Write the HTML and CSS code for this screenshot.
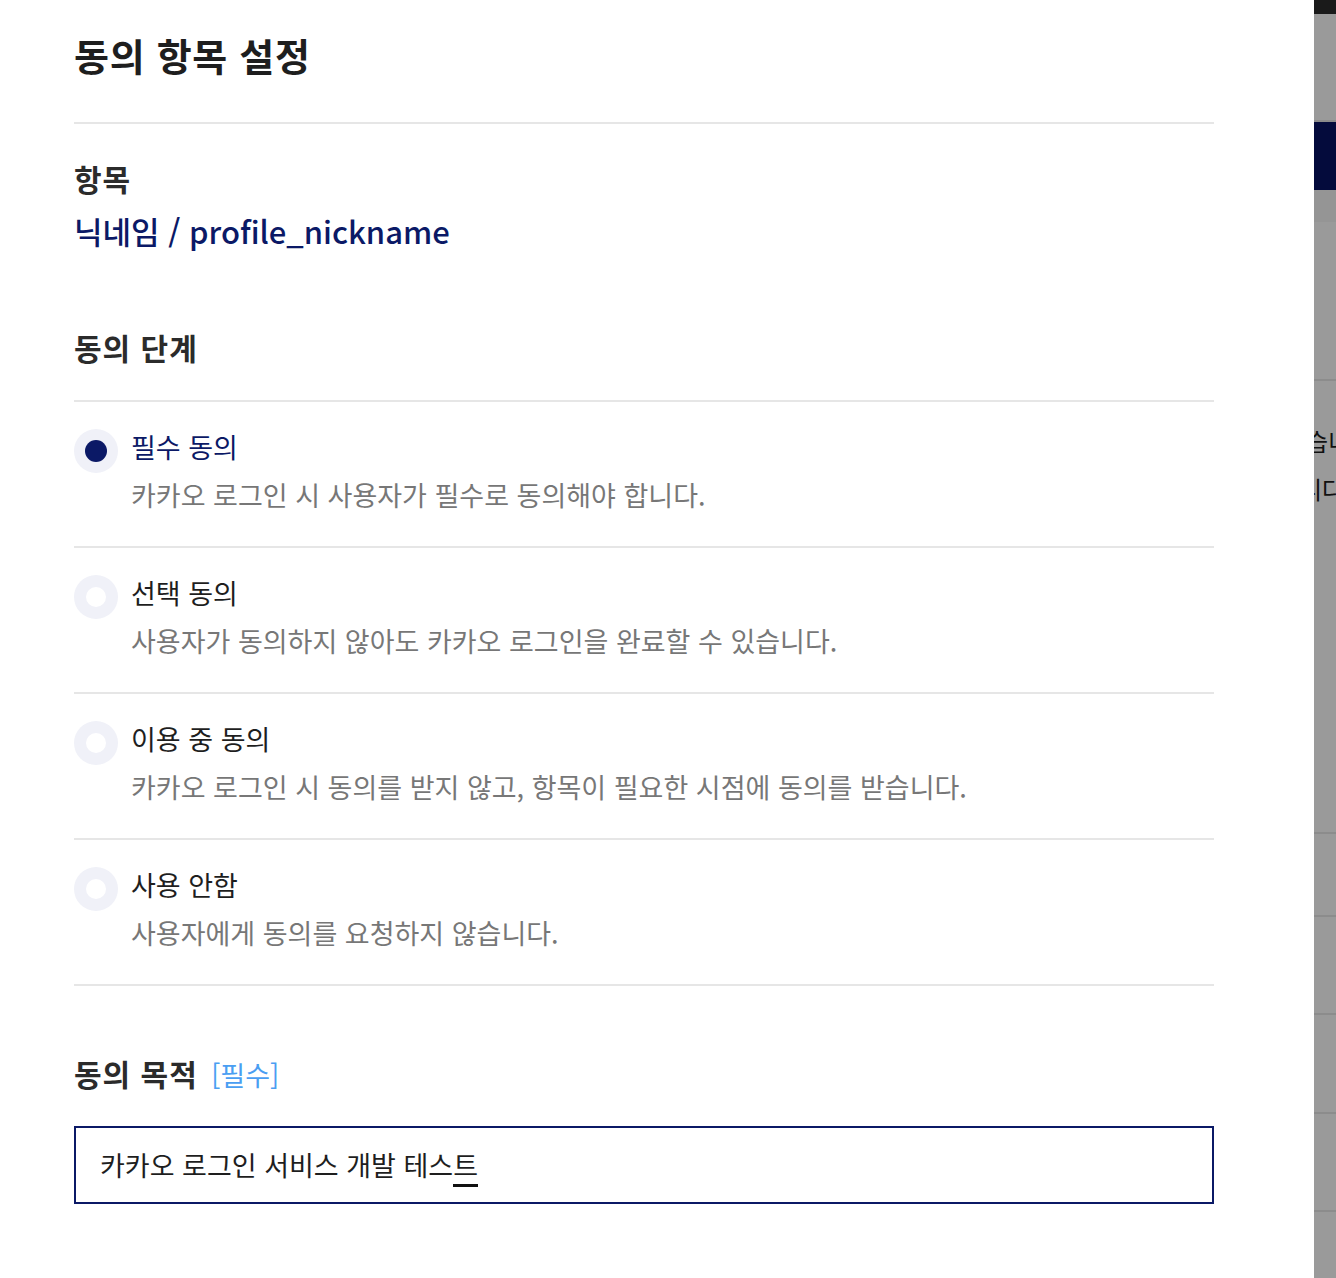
FILE: index.html
```html
<!DOCTYPE html>
<html lang="ko">
<head>
  <meta charset="UTF-8" />
  <meta name="viewport" content="width=device-width, initial-scale=1.0"/>
  <title>동의 항목 설정</title>
  <link rel="stylesheet" href="styles.css">
</head>
<body>
<div class="panel">
  <h1 class="title">동의 항목 설정</h1>

  <div class="field">
    <h3>항목</h3>
    <p class="item-name">닉네임 / profile_nickname</p>
  </div>

  <h3 class="step-title">동의 단계</h3>

  <ul class="options">
    <li class="option selected">
      <span class="radio"></span>
      <div class="option-text">
        <strong>필수 동의</strong>
        <p>카카오 로그인 시 사용자가 필수로 동의해야 합니다.</p>
      </div>
    </li>
    <li class="option">
      <span class="radio"></span>
      <div class="option-text">
        <strong>선택 동의</strong>
        <p>사용자가 동의하지 않아도 카카오 로그인을 완료할 수 있습니다.</p>
      </div>
    </li>
    <li class="option">
      <span class="radio"></span>
      <div class="option-text">
        <strong>이용 중 동의</strong>
        <p>카카오 로그인 시 동의를 받지 않고, 항목이 필요한 시점에 동의를 받습니다.</p>
      </div>
    </li>
    <li class="option">
      <span class="radio"></span>
      <div class="option-text">
        <strong>사용 안함</strong>
        <p>사용자에게 동의를 요청하지 않습니다.</p>
      </div>
    </li>
  </ul>

  <h3 class="purpose-title">동의 목적 <span class="req">[필수]</span></h3>
  <div class="purpose-input">카카오 로그인 서비스 개발 테스<span class="composing">트</span></div>
</div>

<div class="backdrop">
  <div class="bd-top"></div>
  <div class="bd-a"></div>
  <div class="bd-navy"></div>
  <div class="bd-b"></div>
  <div class="bd-c"></div>
  <div class="bd-text">
    <span class="l1">습니</span>
    <span class="l2">니다</span>
  </div>
  <div class="bd-row r1"></div>
  <div class="bd-row r2"></div>
  <div class="bd-row r3"></div>
  <div class="bd-row r4"></div>
  <div class="bd-last"></div>
</div>
</body>
</html>
```

FILE: styles.css
```css
body {
  margin: 0;
  display: flex;
  font-family: "Noto Sans CJK KR", "Noto Sans", sans-serif;
  color: #222;
  background: #fff;
  height: 1278px;
  overflow: hidden;
}

.panel {
  width: 1140px;
  flex: none;
  padding: 31px 100px 0 74px;
  background: #fff;
}

h1, h3, p, ul {
  margin: 0;
  padding: 0;
}

.title {
  font-size: 38px;
  line-height: 48px;
  font-weight: 700;
  letter-spacing: 0.7px;
  color: #1e1e1e;
  padding-bottom: 43px;
  border-bottom: 2px solid #e6e6e6;
}

.field {
  padding-top: 35px;
}

.field h3 {
  font-size: 30px;
  line-height: 38px;
  font-weight: 700;
  letter-spacing: 1px;
  color: #2b2b2b;
}

.item-name {
  margin-top: 14px;
  font-size: 31px;
  line-height: 40px;
  font-weight: 500;
  color: #0b1966;
}

.step-title {
  margin-top: 77px;
  font-size: 30px;
  line-height: 38px;
  font-weight: 700;
  letter-spacing: 1px;
  color: #2b2b2b;
  padding-bottom: 34px;
  border-bottom: 2px solid #e6e6e6;
}

.options {
  list-style: none;
}

.option {
  display: flex;
  gap: 13px;
  height: 146px;
  box-sizing: border-box;
  padding-top: 27px;
  border-bottom: 2px solid #e6e6e6;
}

.radio {
  flex: none;
  width: 44px;
  height: 44px;
  border-radius: 50%;
  background: #f0f1f8;
  display: flex;
  align-items: center;
  justify-content: center;
}

.radio::after {
  content: "";
  width: 20px;
  height: 20px;
  border-radius: 50%;
  background: #fff;
}

.selected .radio::after {
  width: 22px;
  height: 22px;
  background: #0b1966;
}

.option-text strong {
  display: block;
  font-size: 27px;
  line-height: 36px;
  font-weight: 400;
  color: #1e1e1e;
}

.selected .option-text strong {
  color: #0b1966;
}

.option-text p {
  margin-top: 12px;
  font-size: 27px;
  line-height: 36px;
  color: #777;
}

.purpose-title {
  margin-top: 68px;
  font-size: 30px;
  line-height: 38px;
  font-weight: 700;
  letter-spacing: 1px;
  color: #2b2b2b;
}

.req {
  margin-left: 4px;
  font-size: 27px;
  font-weight: 400;
  letter-spacing: 0;
  color: #4a9ef2;
}

.purpose-input {
  margin-top: 32px;
  height: 74px;
  border: 2px solid #0b1966;
  padding-left: 24px;
  font-size: 27px;
  line-height: 74px;
  color: #1e1e1e;
}

.composing {
  border-bottom: 3px solid #111;
}

.backdrop {
  flex: 1;
  display: flex;
  flex-direction: column;
  background: #9a9a9a;
  overflow: hidden;
}

.backdrop > div {
  flex: none;
  box-sizing: border-box;
}

.bd-top {
  height: 14px;
  background: #1a1a1a;
}

.bd-a {
  height: 108px;
  border-bottom: 2px solid #8c8c8c;
}

.bd-navy {
  height: 68px;
  background: #040b3c;
}

.bd-b {
  height: 32px;
  background: #959595;
}

.bd-c {
  height: 159px;
  border-bottom: 2px solid #8c8c8c;
}

.bd-text {
  height: 453px;
  border-bottom: 2px solid #8c8c8c;
  padding-top: 36px;
  font-size: 24px;
  line-height: 48px;
  color: #111;
  white-space: nowrap;
}

.bd-text span {
  display: block;
}

.bd-text .l1 {
  margin-left: -8px;
}

.bd-text .l2 {
  margin-left: -14px;
}

.bd-row {
  border-bottom: 2px solid #8c8c8c;
}

.r1 { height: 83px; }
.r2 { height: 98px; }
.r3 { height: 99px; }
.r4 { height: 98px; }

.backdrop > .bd-last {
  flex: 1;
}
```
